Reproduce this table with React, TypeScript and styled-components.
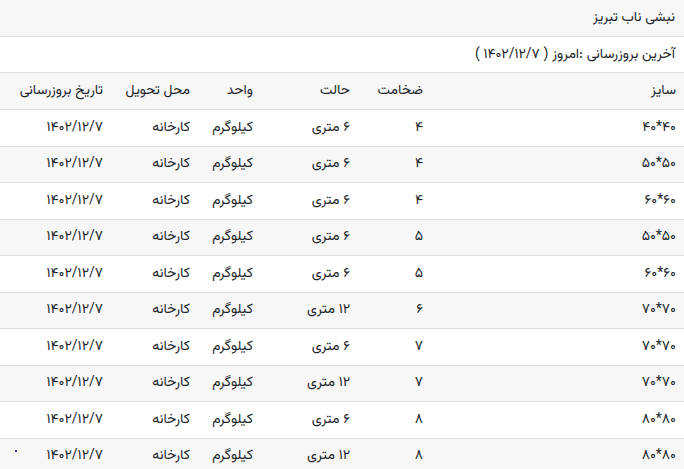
import React from 'react';
import styled, { createGlobalStyle } from "styled-components";

const GlobalStyle = createGlobalStyle`
  html, body {
    margin: 0;
    padding: 0;
    background: #ffffff;
  }
  body {
    font-family: "Vazirmatn", "Noto Sans Arabic", "DejaVu Sans", sans-serif;
    color: #212529;
    font-size: 14px;
    direction: rtl;
  }
`;

const PriceCard = styled.div`
  width: 684px;
  background: #ffffff;
  overflow: hidden;
`;

const CardHeader = styled.div`
  height: 36px;
  display: flex;
  align-items: center;
  padding: 0 9px;
  background: #f7f7f7;
  border-bottom: 1px solid #dfdfdf;
  font-size: 14px;
`;

const UpdateLine = styled.div`
  height: 35px;
  display: flex;
  align-items: center;
  padding: 0 9px;
  border-bottom: 1px solid #dfdfdf;
  font-size: 14px;
`;

const Table = styled.table`
  width: 684px;
  border-collapse: collapse;
  table-layout: fixed;
`;

const HeadCell = styled.th<{ $w: number }>`
  width: ${(p) => p.$w}px;
  height: 36px;
  padding: 0 8px;
  text-align: right;
  font-weight: normal;
  background: #f7f7f7;
  border-bottom: 1px solid #dfdfdf;
  white-space: nowrap;
`;

const Row = styled.tr<{ $striped: boolean }>`
  background: ${(p) => (p.$striped ? "#f7f7f7" : "#ffffff")};
`;

const Cell = styled.td`
  height: 35.5px;
  padding: 0 8px;
  text-align: right;
  border-bottom: 1px solid #dfdfdf;
  white-space: nowrap;
`;

const Dot = styled.span`
  position: absolute;
  left: 15px;
  top: 450px;
  width: 2px;
  height: 2px;
  background: #2b2bd9;
`;

const columns = [
  { title: "سایز", w: 237 },
  { title: "ضخامت", w: 57 },
  { title: "حالت", w: 81 },
  { title: "واحد", w: 47 },
  { title: "محل تحویل", w: 71 },
  { title: "تاریخ بروزرسانی", w: 95 },
];

const rows = [
  ["۴۰*۴۰", "۴", "۶ متری"],
  ["۵۰*۵۰", "۴", "۶ متری"],
  ["۶۰*۶۰", "۴", "۶ متری"],
  ["۵۰*۵۰", "۵", "۶ متری"],
  ["۶۰*۶۰", "۵", "۶ متری"],
  ["۷۰*۷۰", "۶", "۱۲ متری"],
  ["۷۰*۷۰", "۷", "۶ متری"],
  ["۷۰*۷۰", "۷", "۱۲ متری"],
  ["۸۰*۸۰", "۸", "۶ متری"],
  ["۸۰*۸۰", "۸", "۱۲ متری"],
];

const App = () => {
  return (
    <PriceCard>
      <GlobalStyle />
      <CardHeader>نبشی ناب تبریز</CardHeader>
      <UpdateLine>آخرین بروزرسانی :امروز ( ۱۴۰۲/۱۲/۷ )</UpdateLine>
      <Table>
        <thead>
          <tr>
            {columns.map((c) => (
              <HeadCell key={c.title} $w={c.w}>{c.title}</HeadCell>
            ))}
          </tr>
        </thead>
        <tbody>
          {rows.map((r, i) => (
            <Row key={i} $striped={i % 2 === 1}>
              <Cell>{r[0]}</Cell>
              <Cell>{r[1]}</Cell>
              <Cell>{r[2]}</Cell>
              <Cell>کیلوگرم</Cell>
              <Cell>کارخانه</Cell>
              <Cell>۱۴۰۲/۱۲/۷</Cell>
            </Row>
          ))}
        </tbody>
      </Table>
      <Dot />
    </PriceCard>
  );
}

export default App;
